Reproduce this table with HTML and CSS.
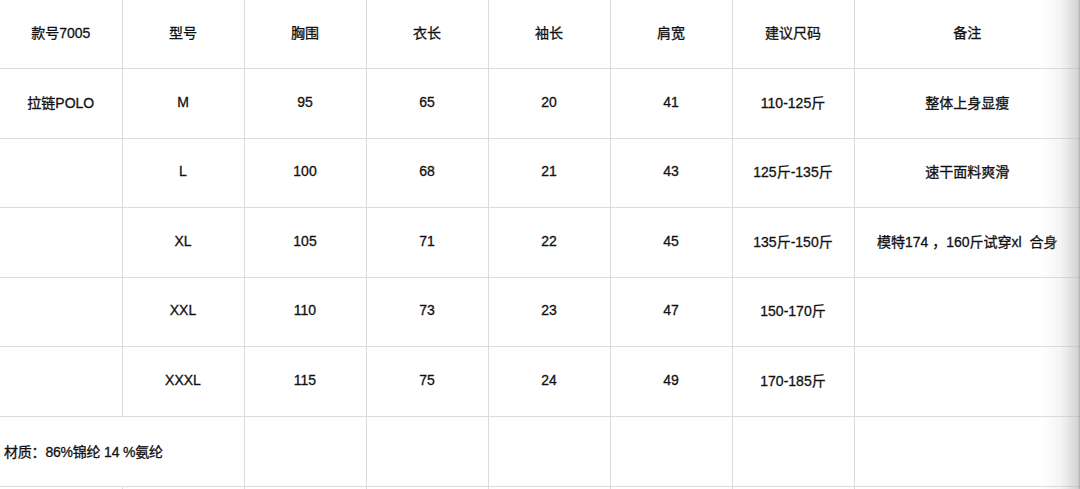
FILE: index.html
```html
<!DOCTYPE html>
<html lang="zh">
<head>
<meta charset="utf-8">
<title>尺码表</title>
<link rel="stylesheet" href="styles.css">
</head>
<body>
<div class="sheet">
  <table class="size-table">
    <colgroup>
      <col class="c"><col class="c"><col class="c"><col class="c"><col class="c"><col class="c"><col class="c"><col class="c-last">
    </colgroup>
    <tr class="r-head">
      <td>款号7005</td><td>型号</td><td>胸围</td><td>衣长</td><td>袖长</td><td>肩宽</td><td>建议尺码</td><td>备注</td>
    </tr>
    <tr class="r70">
      <td>拉链POLO</td><td>M</td><td>95</td><td>65</td><td>20</td><td>41</td><td>110-125斤</td><td>整体上身显瘦</td>
    </tr>
    <tr class="r69">
      <td></td><td>L</td><td>100</td><td>68</td><td>21</td><td>43</td><td>125斤-135斤</td><td>速干面料爽滑</td>
    </tr>
    <tr class="r70">
      <td></td><td>XL</td><td>105</td><td>71</td><td>22</td><td>45</td><td>135斤-150斤</td><td>模特174 ，160斤试穿xl&nbsp; 合身</td>
    </tr>
    <tr class="r69">
      <td></td><td>XXL</td><td>110</td><td>73</td><td>23</td><td>47</td><td>150-170斤</td><td></td>
    </tr>
    <tr class="r70">
      <td></td><td>XXXL</td><td>115</td><td>75</td><td>24</td><td>49</td><td>170-185斤</td><td></td>
    </tr>
    <tr class="r70">
      <td colspan="2" class="material">材质：86%锦纶 14 %氨纶</td><td></td><td></td><td></td><td></td><td></td><td></td>
    </tr>
    <tr class="r70">
      <td></td><td></td><td></td><td></td><td></td><td></td><td></td><td></td>
    </tr>
  </table>
  <div class="edge-shade"></div>
</div>
</body>
</html>
```

FILE: styles.css
```css
html, body {
  margin: 0;
  padding: 0;
  background: #ffffff;
  overflow: hidden;
}

.sheet {
  width: 1080px;
  height: 489px;
  overflow: hidden;
  position: relative;
}

.size-table {
  border-collapse: collapse;
  table-layout: fixed;
  width: 1080px;
  font-family: "Liberation Sans", "Noto Sans CJK SC", sans-serif;
  font-size: 14px;
  color: #111111;
  -webkit-text-stroke: 0.3px #111111;
}

.c { width: 122px; }
.c-last { width: 226px; }

.size-table td {
  border: 1px solid #dcdcdc;
  text-align: center;
  vertical-align: middle;
  padding: 0 0 3px 0;
  white-space: nowrap;
}

.size-table tr:first-child td { border-top: none; }
.size-table td:first-child { border-left: none; }
.size-table td:last-child { border-right: none; }

.r-head { height: 68px; }
.r70 { height: 70px; }
.r69 { height: 69px; }

.size-table td.material {
  text-align: left;
  padding-left: 4px;
  padding-bottom: 0;
  letter-spacing: -0.2px;
}

.edge-shade {
  position: absolute;
  top: 0;
  right: 0;
  width: 38px;
  height: 100%;
  background: linear-gradient(to right, rgba(200,200,200,0) 0%, rgba(200,200,200,0.2) 50%, rgba(185,185,185,0.6) 94%, rgba(160,160,160,0.85) 100%);
  pointer-events: none;
}
```
